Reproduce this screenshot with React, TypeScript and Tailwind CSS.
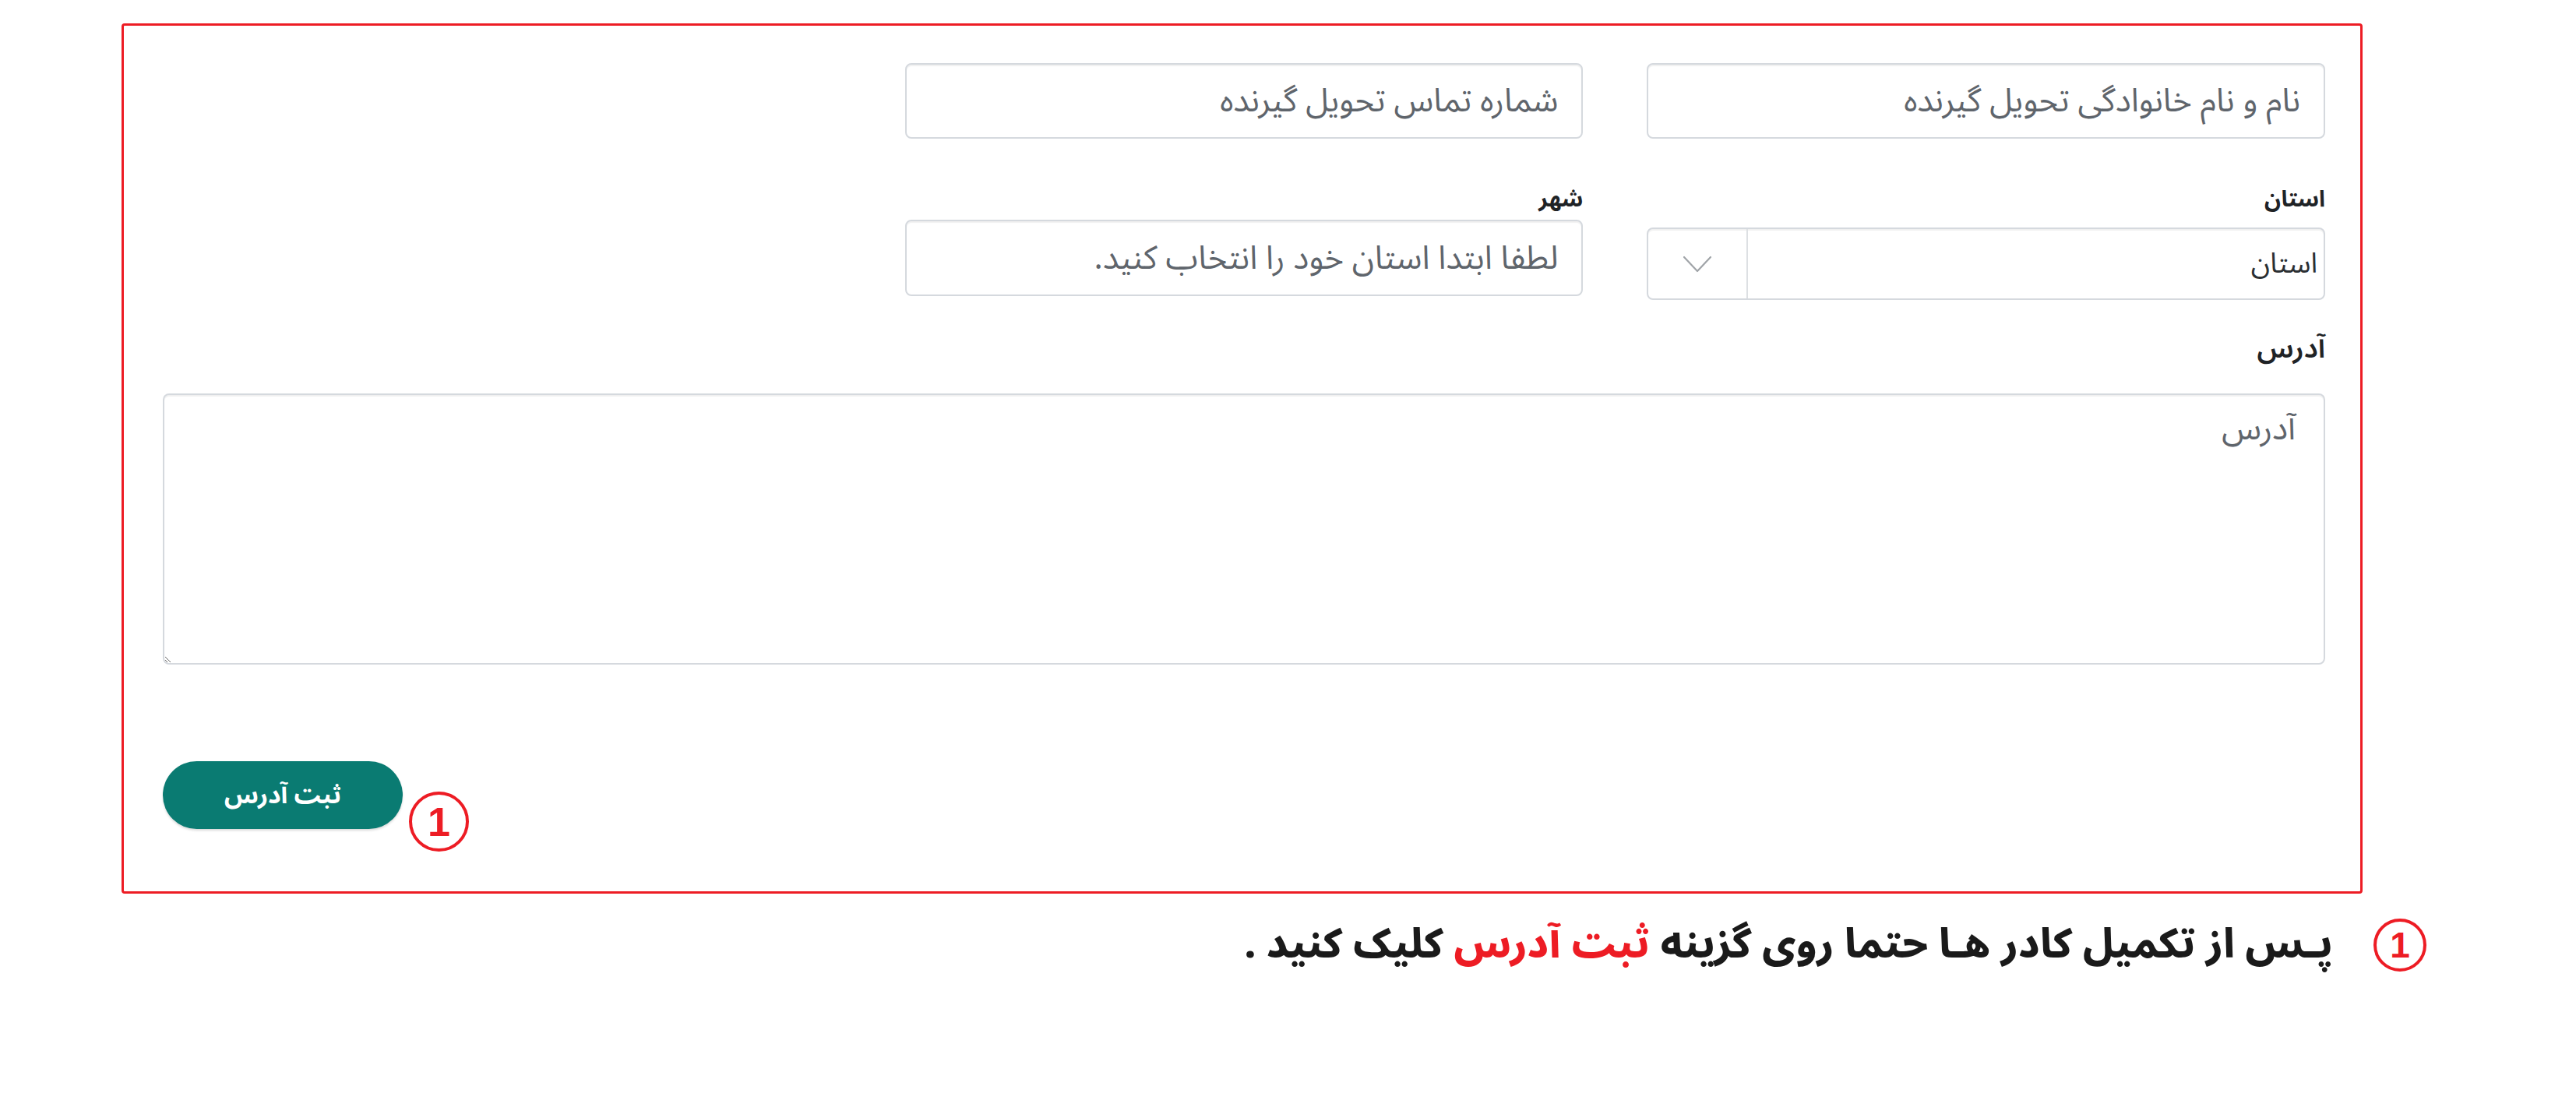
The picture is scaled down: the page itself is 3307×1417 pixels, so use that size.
import React from 'react';

const fa = { fontFamily: '"Noto Sans Arabic", "DejaVu Sans", sans-serif' };

function ChevronDown() {
  return (
    <svg width="38" height="22" viewBox="0 0 38 22" fill="none">
      <path d="M2 2 L19 20 L36 2" stroke="#a0a4a8" strokeWidth="2.2" strokeLinecap="round" strokeLinejoin="round" />
    </svg>
  );
}

function CircleOne({ className }: { className?: string }) {
  return (
    <div
      className={`flex items-center justify-center rounded-full border-[4px] border-[#ed1c24] text-[#ed1c24] font-bold ${className ?? ''}`}
      style={{ fontFamily: '"Liberation Sans", Arial, sans-serif' }}
    >
      1
    </div>
  );
}

export default function App() {
  return (
    <div className="min-h-screen w-full bg-white text-[#212529]" dir="rtl" style={fa}>
      <div className="pt-[30px]">
        {/* form frame */}
        <div className="mr-[274px] ml-[156px] rounded-[4px] border-[3px] border-[#ed1c24] pt-[48px] pb-[80px] pr-[45px] pl-[50px]">
          <div className="grid grid-cols-3 gap-x-[82px]">
            <input
              type="text"
              placeholder="نام و نام خانوادگی تحویل گیرنده"
              className="h-[97px] rounded-[8px] border-2 border-[#d5d9de] bg-white px-[30px] text-[42px] text-[#495057] placeholder-[#5f656c] shadow-[inset_0_2px_1px_rgba(0,0,0,0.06)] outline-none"
            />
            <input
              type="text"
              placeholder="شماره تماس تحویل گیرنده"
              className="h-[97px] rounded-[8px] border-2 border-[#d5d9de] bg-white px-[30px] text-[42px] text-[#495057] placeholder-[#5f656c] shadow-[inset_0_2px_1px_rgba(0,0,0,0.06)] outline-none"
            />
            <div />
          </div>

          <div className="mt-[58px] grid grid-cols-3 gap-x-[82px]">
            <div className="flex flex-col">
              <label className="text-[29px] font-bold leading-[40px] text-[#1f2326]">استان</label>
              <div className="mt-[16px] flex h-[93px] items-stretch rounded-[8px] border-2 border-[#d5d9de] bg-white shadow-[inset_0_2px_1px_rgba(0,0,0,0.06)]">
                <span className="flex flex-1 items-center pr-[8px] text-[36px] text-[#2b2f33]">استان</span>
                <span className="flex w-[128px] items-center justify-center border-r-2 border-[#dde0e3]">
                  <ChevronDown />
                </span>
              </div>
            </div>
            <div className="flex flex-col">
              <label className="text-[29px] font-bold leading-[40px] text-[#1f2326]">شهر</label>
              <input
                type="text"
                placeholder="لطفا ابتدا استان خود را انتخاب کنید."
                className="mt-[6px] h-[98px] rounded-[8px] border-2 border-[#d5d9de] bg-white px-[30px] text-[42px] text-[#495057] placeholder-[#5f656c] shadow-[inset_0_2px_1px_rgba(0,0,0,0.06)] outline-none"
              />
            </div>
            <div />
          </div>

          <label className="mt-[40px] block text-[36px] font-semibold leading-[46px] text-[#1f2326]">آدرس</label>
          <textarea
            placeholder="آدرس"
            className="mt-[34px] block h-[348px] w-full rounded-[8px] border-2 border-[#d5d9de] bg-white px-[36px] py-[12px] text-[42px] text-[#495057] placeholder-[#5f656c] shadow-[inset_0_2px_1px_rgba(0,0,0,0.06)] outline-none"
          />

          <div className="mt-[124px] flex justify-end">
            <div className="flex items-start gap-[8px]" dir="ltr">
              <button className="h-[87px] w-[308px] rounded-full bg-[#0a7b72] text-[32px] font-bold text-white shadow-[0_2px_3px_rgba(0,0,0,0.15)]">
                ثبت آدرس
              </button>
              <CircleOne className="mt-[39px] -mb-[29px] h-[77px] w-[77px] text-[52px]" />
            </div>
          </div>
        </div>

        {/* instruction */}
        <div className="mr-[192px] mt-[32px] flex items-center gap-[52px]">
          <CircleOne className="h-[68px] w-[68px] text-[46px]" />
          <p className="text-[52px] font-extrabold leading-[68px] text-[#1a1a1a]">
            پـس از تکمیل کادر هـا حتما روی گزینه <span className="text-[#ed1c24]">ثبت آدرس</span> کلیک کنید .
          </p>
        </div>
      </div>
    </div>
  );
}
